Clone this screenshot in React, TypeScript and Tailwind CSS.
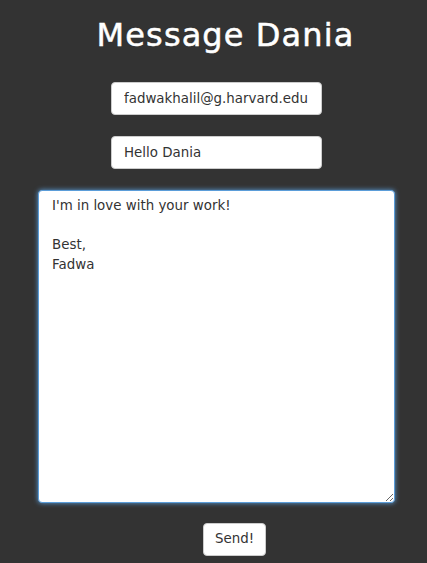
import React, { useEffect, useRef } from 'react';

const font = { fontFamily: '"DejaVu Sans", Verdana, sans-serif' };

export default function App() {
  const bodyRef = useRef<HTMLTextAreaElement>(null);

  // put the caret after "Fadwa" like in the draft
  useEffect(() => {
    const el = bodyRef.current;
    if (el) {
      el.focus();
      el.setSelectionRange(el.value.length, el.value.length);
    }
  }, []);

  return (
    <div
      className="min-h-[563px] w-full bg-[#333333] flex flex-col items-center pt-[15px] pl-[6px]"
      style={font}
    >
      {/* Heading */}
      <h1 className="ml-[18px] text-[32px] leading-[41px] tracking-[1.1px] text-white [-webkit-text-stroke:0.5px_white]">
        Message Dania
      </h1>

      {/* Fields */}
      <input
        type="email"
        defaultValue="fadwakhalil@g.harvard.edu"
        className="mt-[26px] w-[211px] h-[33px] rounded-[4px] border border-[#cccccc] bg-white pl-[12px] pr-[4px] text-[13.4px] text-[#333333] outline-none"
      />
      <input
        type="text"
        defaultValue="Hello Dania"
        className="mt-[21px] w-[211px] h-[33px] rounded-[4px] border border-[#cccccc] bg-white px-[12px] text-[13.4px] text-[#333333] outline-none"
      />
      <textarea
        ref={bodyRef}
        defaultValue={"I'm in love with your work!\n\nBest,\nFadwa"}
        className="mt-[21px] w-[357px] h-[313px] rounded-[4px] border border-[#5b9dd9] bg-white px-[13px] pt-[5px] text-[13.4px] leading-[19.5px] text-[#333333] caret-black outline-none shadow-[0_0_5px_#5b9dd9]"
      />

      {/* Action */}
      <button className="mt-[20px] ml-[36px] w-[63px] h-[33px] rounded-[4px] border border-[#cccccc] bg-white text-[13.4px] text-[#333333]">
        Send!
      </button>
    </div>
  );
}
